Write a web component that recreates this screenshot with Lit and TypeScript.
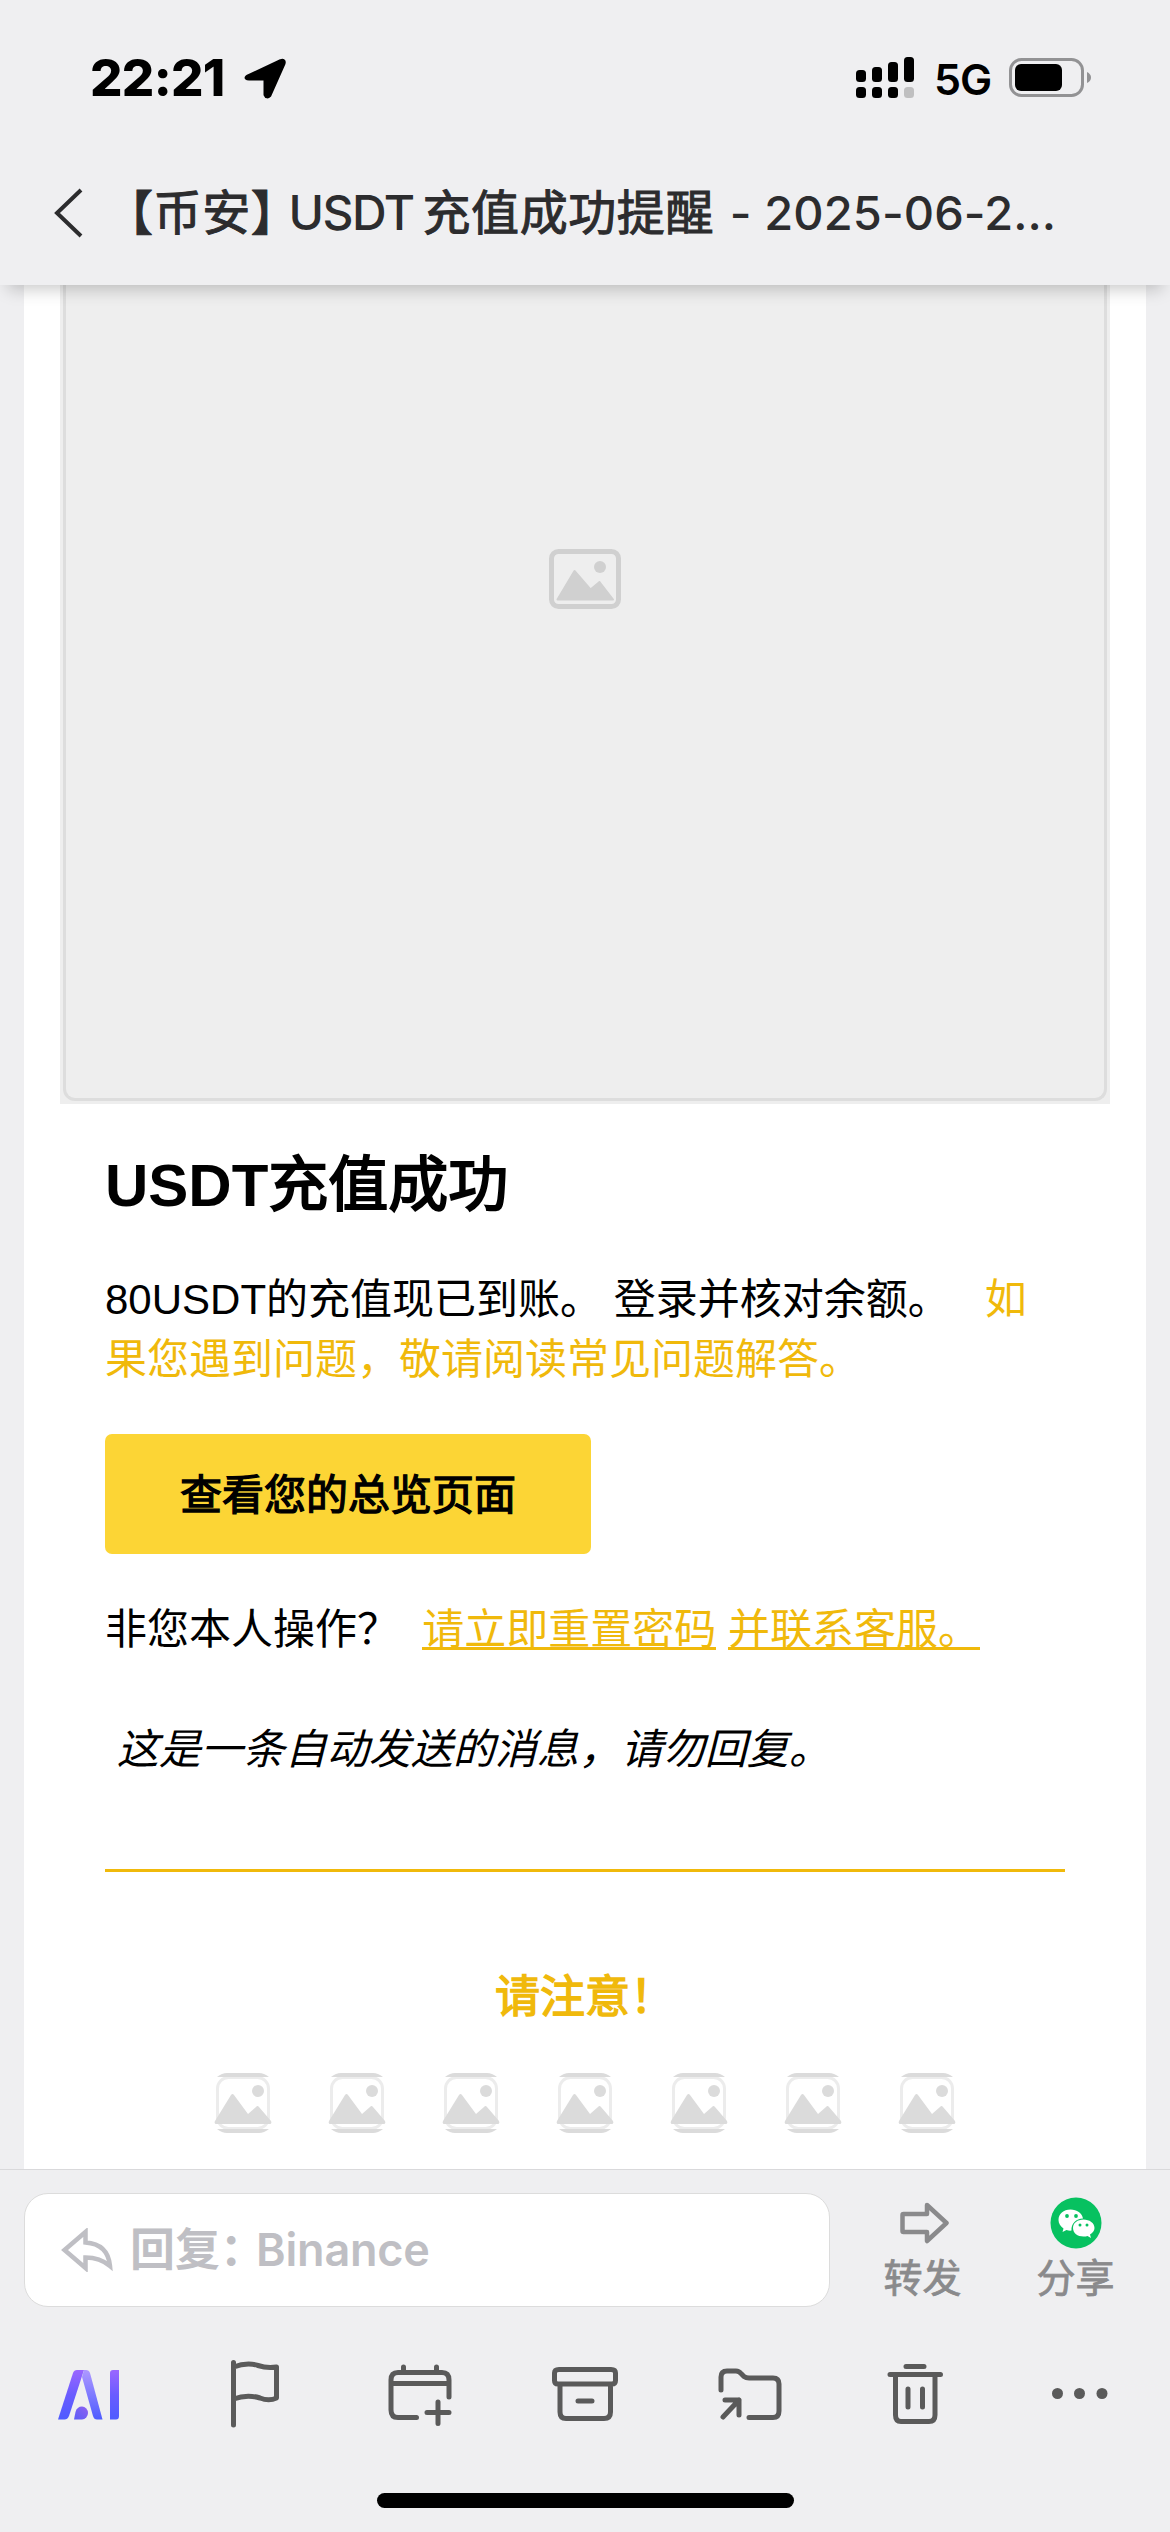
import { LitElement, html, css, svg } from "lit";
import { customElement } from "lit/decorators.js";

const sans = css`"Liberation Sans", "Noto Sans CJK SC", sans-serif`;
const ui = css`Inter, "Noto Sans CJK SC", sans-serif`;

const mountains = svg`<path d="M8.5 51 25.5 22.500 41.500 41 50.500 33.500 64 51Z" transform="translate(0 -0.500)" stroke-width="2" stroke-linejoin="round"/>`;

@customElement("status-bar")
class StatusBar extends LitElement {
  static styles = css`
    :host { display: flex; height: 141px; align-items: flex-start; justify-content: space-between; padding: 57px 78px 0 90px; box-sizing: border-box; color: #000; }
    .left, .right { display: flex; align-items: flex-start; }
    .time { font: 800 51px/42px ${ui}; letter-spacing: -0.700px; width: 153px; white-space: nowrap; }
    .net { font: 600 43px/45px ${ui}; letter-spacing: -1px; margin: 0 0 0 20px; width: 74px; text-indent: -1px; }
    svg { display: block; }
  `;
  render() {
    return html`
      <div class="left">
        <div class="time">22:21</div>
        <svg width="46" height="44" viewBox="0 0 46 44"><path d="M5 20 38 4.500 Q41 3.500 40 6.500 L26 38 Q24 40 23 37.500 V21 H6 Q3 21 5 20Z" stroke="#000" stroke-width="5" stroke-linejoin="round"/></svg>
      </div>
      <div class="right">
        <svg width="60" height="44" viewBox="0 0 60 44">
          <g><rect x="1" y="13" width="10" height="12" rx="3.500"/><rect x="17" y="10" width="10" height="15" rx="3.500"/><rect x="33" y="5" width="10" height="20" rx="3.500"/><rect x="49" y="0" width="10" height="25" rx="3.500"/>
          <rect x="1" y="30" width="10" height="11" rx="3.500"/><rect x="17" y="30" width="10" height="11" rx="3.500"/><rect x="33" y="30" width="10" height="11" rx="3.500"/><rect x="49" y="30" width="10" height="11" rx="3.500" fill="#bfbfc0"/></g>
        </svg>
        <div class="net">5G</div>
        <svg width="83" height="42" viewBox="0 0 83 42"><rect x="1.500" y="2.500" width="72" height="36" rx="11" fill="none" stroke="#929294" stroke-width="3"/><rect x="6" y="7" width="47" height="27" rx="6"/><path d="M78 15Q82 17 82 20.500T78 26Z" fill="#929294"/></svg>
      </div>`;
  }
}

@customElement("title-bar")
class TitleBar extends LitElement {
  static styles = css`
    :host { display: flex; height: 144px; align-items: center; padding: 0 0 0 52px; box-sizing: border-box; color: #2c2c2e; }
    svg { display: block; }
    h1 { margin: 0 0 0 22px; display: flex; font: 400 48px/60px ${ui}; letter-spacing: 0.600px; white-space: pre; }
    .cjk { -webkit-text-stroke: 1px currentColor; }
    .bracket { margin-right: -25px; }
    .word { font-weight: 550; letter-spacing: -1.500px; margin: 0 9px 0 14px; }
    .date { font-weight: 550; font-size: 47px; letter-spacing: 0.100px; margin-left: 3px; }
  `;
  render() {
    return html`
      <svg width="31" height="50" viewBox="0 0 31 50"><path d="M29 2 5 25 29 48" fill="none" stroke="currentColor" stroke-width="4"/></svg>
      <h1><span class="cjk bracket">&#x3010;币安&#x3011;</span><span class="word">USDT</span><span class="cjk">充值成功提醒</span><span class="date"> - 2025-06-2…</span></h1>`;
  }
}

@customElement("mail-body")
class MailBody extends LitElement {
  static styles = css`
    :host { display: block; height: 1884px; padding: 0 24px; box-sizing: border-box; overflow: hidden; }
    .sheet { background: #fff; height: 100%; padding: 0 36px; }
    .banner { height: 819px; box-sizing: border-box; background: #eee; padding: 0 3px 3px; }
    .frame { height: 816px; box-sizing: border-box; border: 3px solid #ddd; border-top: 0; border-radius: 0 0 12px 12px; display: flex; justify-content: center; padding-top: 264px; }
    .content { padding: 0 45px; font: 400 42px/60px ${sans}; color: #000; }
    h2 { margin: 0; padding-top: 40px; font: 700 60px/84px ${sans}; }
    h2 span { font-weight: 400; -webkit-text-stroke: 2px currentColor; }
    p { margin: 0; }
    .intro { padding-top: 42px; }
    .gold { color: #f0b90b; }
    .btn { display: block; width: max-content; background: #fcd535; border-radius: 7px; -webkit-text-stroke: 1.300px currentColor; line-height: 123px; padding: 0 75px; margin-top: 44px; height: 120px; }
    .ask { padding-top: 46px; white-space: pre; }
    .ask a { color: #f0b90b; border-bottom: 3px solid; line-height: 42px; display: inline-block; height: 38px; }
    .auto { padding-top: 60px; font-style: italic; white-space: pre; }
    .rule { height: 3px; background: #f0b90b; margin-top: 89px; }
    .note { text-align: center; color: #f0b90b; -webkit-text-stroke: 1.400px currentColor; font-size: 45px; padding-top: 96px; }
    .icons { display: flex; justify-content: center; gap: 54px; padding-top: 45px; }
    svg { display: block; }
  `;
  render() {
    return html`
      <div class="sheet">
        <div class="banner"><div class="frame">
          <svg width="72" height="60" viewBox="0 0 72 60" fill="#d0d0d0" stroke="#d0d0d0"><rect x="2.500" y="2.500" width="67" height="55" rx="7" fill="none" stroke-width="5"/><circle cx="51" cy="18" r="6" stroke="none"/>${mountains}</svg>
        </div></div>
        <div class="content">
          <h2>USDT<span>充值成功</span></h2>
          <p class="intro">80USDT的充值现已到账。 登录并核对余额。&nbsp;&nbsp;&nbsp;<span class="gold">如果您遇到问题&#xFF0C;敬请阅读常见问题解答。</span></p>
          <div class="btn">查看您的总览页面</div>
          <p class="ask">非您本人操作&#xFF1F;  <a>请立即重置密码</a> <a>并联系客服。</a></p>
          <p class="auto"> 这是一条自动发送的消息&#xFF0C;请勿回复。</p>
          <div class="rule"></div>
          <div class="note">请注意&#xFF01;</div>
          <div class="icons">${Array.from({ length: 7 }, () => html`
            <svg width="60" height="60" viewBox="0 0 60 60"><rect x="4.500" y="4.500" width="51" height="51" rx="11" fill="none" stroke="#ececec" stroke-width="3"/>
              <g fill="#dbdbdb"><path d="M4 4Q9 0 14 0H46Q51 0 56 4ZM4 56Q9 60 14 60H46Q51 60 56 56Z"/><circle cx="45" cy="18" r="6"/><path d="M2.500 51Q1 50 2 48L18 22Q19.500 20 21 22L35 41 43 34Q44.500 32 46 34L58 48Q59 50 57.500 51Z"/></g></svg>`)}
          </div>
        </div>
      </div>`;
  }
}

@customElement("bottom-bar")
class BottomBar extends LitElement {
  static styles = css`
    :host { display: block; height: 363px; box-sizing: border-box; border-top: 1px solid #d9d9db; padding-top: 23px; }
    .row { display: flex; align-items: flex-start; height: 114px; padding-left: 24px; }
    .reply { width: 806px; height: 114px; box-sizing: border-box; background: #fff; border: 1px solid #dcdcdc; border-radius: 24px; display: flex; align-items: center; padding-left: 36px; color: #bfbfc4; font: 600 45px/60px ${ui}; white-space: pre; }
    .reply svg { margin-right: 17px; }
    .name { letter-spacing: -0.200px; margin-left: -9px; }
    .act { width: 153px; display: flex; flex-direction: column; align-items: center; color: #8a8a8c; font: 400 39px/48px ${ui}; padding-top: 4px; }
    .act span { -webkit-text-stroke: 0.800px currentColor; }
    .fwd { margin-left: 16px; }
    .act svg { margin-bottom: 5px; }
    .tools { display: grid; grid-template-columns: repeat(7, 165px); justify-content: center; padding-top: 47px; height: 80px; align-items: center; }
    .tools svg { justify-self: center; fill: none; stroke: #5a5a5a; stroke-width: 5; stroke-linecap: round; stroke-linejoin: round; }
    .home { width: 417px; height: 15px; border-radius: 8px; background: #000; margin: 59px auto 0; }
    svg { display: block; }
  `;
  render() {
    return html`
      <div class="row">
        <div class="reply"><svg width="52" height="44" viewBox="0 0 52 44"><path d="M24.500 4 3.500 22 24.500 40V29.500Q39 29.500 49 38Q47 16 24.500 14.500Z" fill="none" stroke="currentColor" stroke-width="4.500"/></svg><span>回复&#xFF1A;</span><span class="name">Binance</span></div>
        <div class="act fwd"><svg width="52" height="52" viewBox="-2 0 52 52"><path d="M4.500 17H28V8L47.500 26 28 44V35H4.500Q3.500 35 3.500 34V18Q3.500 17 4.500 17Z" fill="none" stroke="currentColor" stroke-width="4.500" stroke-linejoin="round"/></svg><span>转发</span></div>
        <div class="act"><svg width="52" height="52" viewBox="0 0 52 52"><circle cx="26" cy="26" r="25.500" fill="#07c160"/>
          <path d="M20.500 12.500C13.500 12.500 8.500 17 8.500 23C8.500 26.500 10.500 29.500 13.500 31.500L12.500 35 16.500 33Q19.500 34 21.500 33.500C21 26.500 26 21.500 33 21.500C32 16 27 12.500 20.500 12.500Z" fill="#fff"/><path d="M33.500 22.500C27.500 22.500 23 26 23 31S27.500 39.500 33.500 39.500Q36 39.500 37.500 39L41 41 40 37.500C42.500 36 44.500 34 44.500 31C44.500 26 39.500 22.500 33.500 22.500Z" fill="#fff"/><g fill="#07c160"><circle cx="17" cy="19" r="1.900"/><circle cx="26" cy="19" r="1.900"/><circle cx="30" cy="28" r="1.500"/><circle cx="37" cy="28" r="1.500"/></g></svg><span>分享</span></div>
      </div>
      <div class="tools">
        <svg width="72" height="72" viewBox="54 2358 72 72"><defs>
          <linearGradient id="g" x1="0" y1="0" x2="0" y2="1"><stop offset="0" stop-color="#9a66ff"/><stop offset=".5" stop-color="#6a5cff"/><stop offset="1" stop-color="#4e5cff"/></linearGradient>
          <linearGradient id="l" x1="0" y1="0" x2="0" y2="1"><stop offset="0" stop-color="#ae98ff"/><stop offset="1" stop-color="#4e5cff"/></linearGradient>
          <linearGradient id="d" x1="1" y1="0" x2="0" y2="1"><stop offset="0" stop-color="#8f62f0"/><stop offset="1" stop-color="#5a5cf8"/></linearGradient></defs>
          <g stroke="none"><path d="M58 2419.500 73 2373Q74 2370 77 2370H84L69 2416Q67.500 2419.500 64.500 2419.500Z" fill="url(#g)"/><path d="M82 2377 84 2370H86Q89 2370 90 2373L102.500 2419.500H97Q94 2419.500 93 2416Z" fill="url(#l)"/><path d="M74 2419.500 75.500 2412Q77 2406.500 82 2406.500A6 6.500 0 0 1 82 2419.500Z" fill="url(#d)"/><path d="M110 2419.500V2373Q110 2370 113 2370H119V2416Q119 2419.500 116 2419.500Z" fill="url(#g)"/></g></svg>
        <svg width="72" height="72" viewBox="219 2358 72 72"><path d="M233.500 2362.500V2425M233.500 2367Q247 2362 258 2365.500Q267 2368.500 276.500 2367V2398Q269 2401.500 260 2398Q247 2394 233.500 2399"/></svg>
        <svg width="72" height="72" viewBox="384 2358 72 72"><path d="M449 2397V2380Q449 2372.500 442 2372.500H398Q391 2372.500 391 2380V2410Q391 2417.500 398 2417.500H416.500M391 2383.500H449M403.500 2367V2372M436.500 2367V2372M438 2402V2423.500M427 2412.500H449"/></svg>
        <svg width="72" height="72" viewBox="549 2358 72 72"><path d="M559 2369.500H611Q615.500 2369.500 615.500 2373V2380.500Q615.500 2384 612 2384H558Q554.500 2384 554.500 2380.500V2373Q554.500 2369.500 559 2369.500ZM560 2385V2412Q560 2418.500 566 2418.500H604Q610.500 2418.500 610.500 2412V2385M578 2401H592"/></svg>
        <svg width="72" height="72" viewBox="714 2358 72 72"><path d="M721 2390V2377Q721 2371 727 2371H736Q739 2371 741.500 2374L744 2376.500Q746 2378 749 2378H773Q779 2378 779 2384V2411Q779 2417.500 773 2417.500H749M723 2417 739 2400M725 2400H739V2415"/></svg>
        <svg width="72" height="72" viewBox="879 2358 72 72"><path d="M906 2366.500H924M890 2374.500H940.500M895.500 2375V2415Q895.500 2421.500 901 2421.500H929Q935 2421.500 935 2415V2375M908 2389V2407M922.500 2389V2407"/></svg>
        <svg width="72" height="72" viewBox="1044 2358 72 72"><g fill="#5a5a5a" stroke="none"><circle cx="1057.500" cy="2393.500" r="5.500"/><circle cx="1079.500" cy="2393.500" r="5.500"/><circle cx="1102" cy="2393.500" r="5.500"/></g></svg>
      </div>
      <div class="home"></div>`;
  }
}

@customElement("app-root")
class AppRoot extends LitElement {
  static styles = css`
    :host { display: flex; flex-direction: column; width: 1170px; height: 2532px; overflow: hidden; background: #efeff1; }
    header { height: 285px; flex: none; position: relative; background: #efeff1; box-shadow: 0 12px 16px -8px rgba(0, 0, 0, 0.22); z-index: 1; }
    status-bar { height: 141px; }
    mail-body, bottom-bar { flex: none; }
  `;
  render() {
    return html`
      <header><status-bar></status-bar><title-bar></title-bar></header>
      <mail-body></mail-body>
      <bottom-bar></bottom-bar>`;
  }
}
